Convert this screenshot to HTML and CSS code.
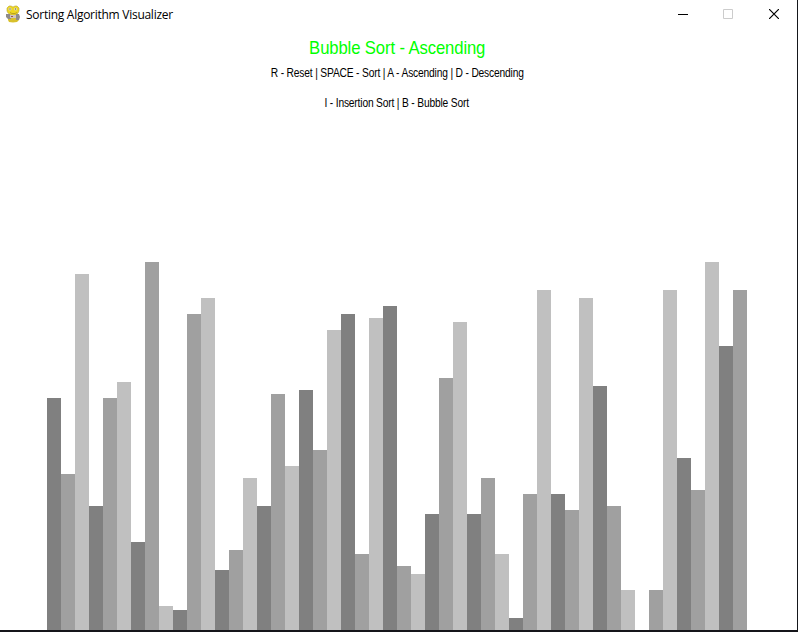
FILE: index.html
```html
<!DOCTYPE html>
<html lang="en">
<head>
<meta charset="utf-8">
<title>Sorting Algorithm Visualizer</title>
<link rel="stylesheet" href="styles.css">
</head>
<body>
<div class="window">
  <header class="titlebar">
    <svg class="app-icon" width="14" height="18" viewBox="0 0 14 18">
      <path d="M2 13h9l2 2-2 2-4 .5L3 17l-1-2z" fill="#d8c02c"/>
      <path d="M3 1h2l2 1 2-1h2l2 2v3l-1 2-2 2H5L2 8 1 6V3z" fill="#eed71f" stroke="#b8a432" stroke-width=".6"/>
      <circle cx="4" cy="4" r="1.6" fill="#d9d5b4"/><circle cx="9.500" cy="4" r="1.600" fill="#d9d5b4"/>
      <path d="M3.500 4h1M9 4h1" stroke="#70642a"/>
      <path d="M4 7.500l2 1h3l2-1" stroke="#a08d25" fill="none" stroke-width=".7"/>
      <path d="M0 9h4l1 2v3H2L0 12zM10 9h3l1 3-1 3h-3z" fill="#8f8b88"/>
      <path d="M4 10h6v3H4z" fill="#cfc5bf"/>
      <path d="M5 11.500h2" stroke="#94544f"/>
    </svg>
    <h1 class="caption">Sorting Algorithm Visualizer</h1>
    <div class="controls">
      <svg width="10" height="10" viewBox="0 0 10 10"><path d="M0 5.500h10" stroke="#000"/></svg>
      <svg width="10" height="10" viewBox="0 0 10 10"><path d="M.5.5h9v9h-9z" fill="none" stroke="#ccc"/></svg>
      <svg width="10" height="10" viewBox="0 0 10 10"><path d="M0 0l10 10M10 0L0 10" stroke="#000" stroke-width="1.2"/></svg>
    </div>
  </header>
  <main class="canvas">
    <h2 class="mode">Bubble Sort - Ascending</h2>
    <p class="keys">R - Reset | SPACE - Sort | A - Ascending | D - Descending</p>
    <p class="keys sorts">I - Insertion Sort | B - Bubble Sort</p>
    <div class="bars" id="bars"></div>
  </main>
</div>
<script src="bars.js"></script>
</body>
</html>
```
FILE: styles.css
```css
* { box-sizing: border-box; }
body { margin: 0; background: #fff; }
.window {
  display: flex;
  flex-direction: column;
  width: 798px;
  height: 632px;
  border-right: 1px solid #15171b;
  border-bottom: 2px solid #15151a;
}
.titlebar {
  display: flex;
  align-items: center;
  height: 28px;
  padding: 0 18px 0 6px;
}
.app-icon { margin-right: 6px; }
.caption {
  margin: 2px 0 0;
  font: 400 12px/16px "Open Sans", sans-serif;
  letter-spacing: -0.27px;
  color: #000;
  white-space: nowrap;
}
.controls { display: flex; margin-left: auto; }
.controls svg { display: block; }
.controls svg:nth-child(2) { margin: 0 36px 0 35px; }
.canvas {
  display: flex;
  flex: 1;
  flex-direction: column;
  align-items: center;
  padding-right: 3px;
  font-family: "Liberation Sans", Arial, sans-serif;
  white-space: nowrap;
}
.mode { margin: 8px 0 0; font-size: 19px; line-height: 24px; font-weight: 400; letter-spacing: -0.15px; color: #0f0; transform: scaleX(.879); }
.keys { margin: 5px 0 0; font-size: 12px; line-height: 16px; letter-spacing: -0.2px; color: #000; transform: scaleX(.853); }
.sorts { margin-top: 14px; }
.bars { display: flex; align-items: flex-end; width: 700px; margin: auto 0 0 47px; align-self: flex-start; }
.bar { width: 14px; background: #808080; }
.bar:nth-child(3n+2) { background: #a0a0a0; }
.bar:nth-child(3n) { background: #c0c0c0; }
```
FILE: bars.js
```js
const UNIT = 4;
const values = [58, 39, 89, 31, 58, 62, 22, 92, 6, 5, 79, 83, 15, 20, 38, 31, 59, 41, 60, 45, 75, 79, 19, 78, 81,
  16, 14, 29, 63, 77, 29, 38, 19, 3, 34, 85, 34, 30, 83, 61, 31, 10, 0, 10, 85, 43, 35, 92, 71, 85];
const bars = document.getElementById("bars");
for (const value of values) {
  const bar = document.createElement("div");
  bar.className = "bar";
  bar.style.height = value * UNIT + "px";
  bars.append(bar);
}
```
